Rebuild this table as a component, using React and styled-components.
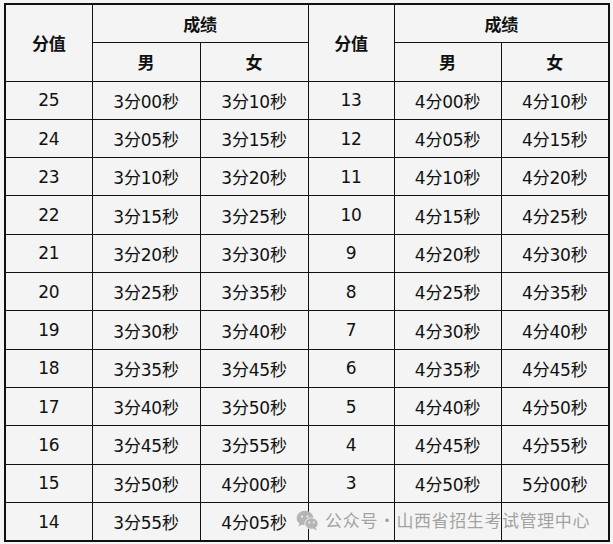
import React from 'react'
import styled, { createGlobalStyle } from 'styled-components'

const GlobalStyle = createGlobalStyle`
  html, body {
    margin: 0;
    background: #f3f4f3;
  }
  body {
    font-family: "DejaVu Sans", "Noto Sans CJK SC", sans-serif;
  }
`

const Page = styled.div`
  position: relative;
  padding: 3px 0 0 4px;
  width: 613px;
  height: 544px;
  box-sizing: border-box;
  overflow: hidden;
`

const Table = styled.table`
  border-collapse: collapse;
  table-layout: fixed;
  width: 604px;
  border: 2px solid #111;
  color: #111;
`

const Cell = styled.td`
  border: 1px solid #111;
  height: 37.3px;
  padding: 0;
  text-align: center;
  vertical-align: middle;
  font-size: 17px;
  font-weight: ${p => (p.head ? 700 : 400)};
  font-family: "DejaVu Sans", "Noto Sans CJK SC", sans-serif;
  letter-spacing: -0.2px;
`

const Mark = styled.div`
  position: absolute;
  left: 296px;
  top: 509px;
  display: flex;
  align-items: center;
  white-space: nowrap;
  color: rgba(140, 140, 140, 0.8);
  font-family: "Noto Sans CJK SC", sans-serif;
  font-size: 17px;
  line-height: 22px;
  pointer-events: none;
`

const MarkPart = styled.span`
  letter-spacing: ${p => p.spacing}px;
  margin-left: ${p => p.gap}px;
`

const rows = [
  ['25', '3分00秒', '3分10秒', '13', '4分00秒', '4分10秒'],
  ['24', '3分05秒', '3分15秒', '12', '4分05秒', '4分15秒'],
  ['23', '3分10秒', '3分20秒', '11', '4分10秒', '4分20秒'],
  ['22', '3分15秒', '3分25秒', '10', '4分15秒', '4分25秒'],
  ['21', '3分20秒', '3分30秒', '9', '4分20秒', '4分30秒'],
  ['20', '3分25秒', '3分35秒', '8', '4分25秒', '4分35秒'],
  ['19', '3分30秒', '3分40秒', '7', '4分30秒', '4分40秒'],
  ['18', '3分35秒', '3分45秒', '6', '4分35秒', '4分45秒'],
  ['17', '3分40秒', '3分50秒', '5', '4分40秒', '4分50秒'],
  ['16', '3分45秒', '3分55秒', '4', '4分45秒', '4分55秒'],
  ['15', '3分50秒', '4分00秒', '3', '4分50秒', '5分00秒'],
  ['14', '3分55秒', '4分05秒', '', '', ''],
]

function WeChat() {
  return (
    <svg width="23" height="21" viewBox="0 0 23 21">
      <ellipse cx="9" cy="8" rx="8.5" ry="7.2" fill="#b5b5b5" />
      <path d="M3.5 13 L2.5 16.5 L7 14 Z" fill="#b5b5b5" />
      <circle cx="6" cy="6.5" r="1.1" fill="#f3f4f3" />
      <circle cx="11.5" cy="6.5" r="1.1" fill="#f3f4f3" />
      <ellipse cx="15.5" cy="13.5" rx="7" ry="6" fill="#f3f4f3" />
      <ellipse cx="15.5" cy="13.5" rx="6.2" ry="5.3" fill="#b5b5b5" />
      <path d="M19.5 17.5 L21 20.5 L17 18.5 Z" fill="#b5b5b5" />
      <circle cx="13.3" cy="12.5" r="0.9" fill="#f3f4f3" />
      <circle cx="17.7" cy="12.5" r="0.9" fill="#f3f4f3" />
    </svg>
  )
}

export default function App() {
  return (
    <Page>
      <GlobalStyle />
      <Table>
        <colgroup>
          <col style={{ width: 87 }} />
          <col style={{ width: 108 }} />
          <col style={{ width: 108 }} />
          <col style={{ width: 86 }} />
          <col style={{ width: 107 }} />
          <col style={{ width: 108 }} />
        </colgroup>
        <tbody>
          <tr>
            <Cell head rowSpan={2}>分值</Cell>
            <Cell head colSpan={2}>成绩</Cell>
            <Cell head rowSpan={2}>分值</Cell>
            <Cell head colSpan={2}>成绩</Cell>
          </tr>
          <tr>
            <Cell head>男</Cell>
            <Cell head>女</Cell>
            <Cell head>男</Cell>
            <Cell head>女</Cell>
          </tr>
          {rows.map((r, i) => (
            <tr key={i}>
              {r.map((v, j) => (
                <Cell key={j}>{v}</Cell>
              ))}
            </tr>
          ))}
        </tbody>
      </Table>
      <Mark>
        <WeChat />
        <MarkPart gap={6} spacing={0.8}>公众号</MarkPart>
        <MarkPart gap={0} spacing={0}>·</MarkPart>
        <MarkPart gap={1} spacing={0.6}>山西省招生考试管理中心</MarkPart>
      </Mark>
    </Page>
  )
}
